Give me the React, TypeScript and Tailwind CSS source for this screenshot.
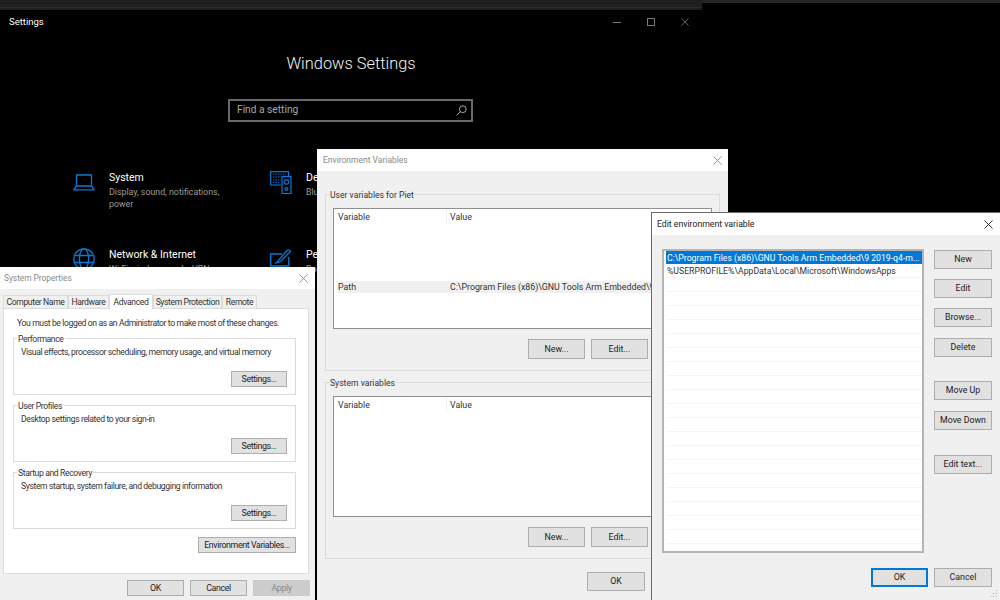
import type { ReactNode } from 'react';

const font = 'font-["Roboto",sans-serif]';
// the System Properties dialog reads tall and tightly set in the screenshot
const tight = 'text-[8.6px] tracking-[-0.38px]';

function Btn({ children, className = '' }: { children: ReactNode; className?: string }) {
  return (
    <div
      className={`flex h-[19px] w-[58px] items-center justify-center whitespace-nowrap border border-[#adadad] bg-[#e1e1e1] text-[8.8px] leading-none text-[#222] ${className}`}
    >
      {children}
    </div>
  );
}

function CloseX({ color = '#8a8a8a', size = 9 }: { color?: string; size?: number }) {
  return (
    <svg width={size} height={size} viewBox="0 0 10 10" fill="none" stroke={color} strokeWidth="1">
      <path d="M0.5 0.5l9 9M9.5 0.5l-9 9" />
    </svg>
  );
}

function Legend({ children, className = '' }: { children: ReactNode; className?: string }) {
  return (
    <span className={`absolute left-[3px] top-[-6px] bg-inherit px-[1px] leading-[13px] text-[#333] ${className}`}>
      {children}
    </span>
  );
}

function SettingsItem({
  icon,
  title,
  desc,
}: {
  icon: ReactNode;
  title: string;
  desc: ReactNode;
}) {
  return (
    <div className="flex h-[77px] gap-[14px]">
      <div className="flex h-[24px] w-[22px] shrink-0 items-center justify-center">{icon}</div>
      <div className="w-[125px]">
        <div className="text-[10.5px] leading-[15px] text-white">{title}</div>
        <div className="mt-[1px] whitespace-nowrap text-[8.8px] leading-[12px] text-[#9b9b9b]">{desc}</div>
      </div>
    </div>
  );
}

const icons = {
  laptop: (
    <svg width="22" height="17" viewBox="0 0 22 17" fill="none" stroke="#0a78d7" strokeWidth="1.3">
      <path d="M3.5 12V1h15v11M0.7 15.8h20.6L18.5 12h-15z" />
    </svg>
  ),
  devices: (
    <svg width="22" height="23" viewBox="0 0 22 23" fill="none" stroke="#0a78d7" strokeWidth="1.2">
      <path d="M11 14H0.7V0.7h17.8V5" />
      <path d="M3 3h13M3 6h8M3 9h8M3 11.5h6" strokeDasharray="1.5 1" />
      <rect x="12" y="5.5" width="9" height="17" />
      <circle cx="16.5" cy="11" r="2.2" />
      <circle cx="16.5" cy="18" r="1.4" />
    </svg>
  ),
  globe: (
    <svg width="22" height="22" viewBox="0 0 22 22" fill="none" stroke="#0a78d7" strokeWidth="1.3">
      <circle cx="11" cy="11" r="10.2" />
      <ellipse cx="11" cy="11" rx="4.6" ry="10.2" />
      <path d="M1 7.5h20M1 14.5h20" />
    </svg>
  ),
  pen: (
    <svg width="22" height="22" viewBox="0 0 22 22" fill="none" stroke="#0a78d7" strokeWidth="1.3">
      <path d="M12 6H0.7v12h18V9M8 21h4" />
      <path d="M5 15c2.5 0 3-1 3.6-2.6L17 2.5c1-1 3-.2 3.4 1L11.5 12.5c-1 1.5-3 2.5-6.5 2.5z" />
    </svg>
  ),
};

function SettingsWindow() {
  return (
    <div className="absolute left-0 top-0 h-[600px] w-[702px] text-white">
      <div className="flex h-[10px] items-start bg-[#1f1f1f]">
        <div className="h-[8px] w-full border-b border-[#2b2b2b]" />
      </div>
      <div className="flex h-[24px] items-center justify-between pl-[9px] pr-[13px]">
        <span className="text-[9.5px] leading-none">Settings</span>
        <div className="flex items-center gap-[26px]">
          <div className="h-px w-[8px] bg-[#7a7a7a]" />
          <div className="h-[8px] w-[8px] border border-[#7a7a7a]" />
          <CloseX color="#7a7a7a" size={8} />
        </div>
      </div>
      <div className="mt-[18px] text-center text-[16.4px] font-light leading-[24px] text-[#f2f2f2]">Windows Settings</div>
      <div className="ml-[228px] mt-[23px] flex h-[23px] w-[245px] items-center justify-between border-2 border-[#6a6a6a] pl-[7px] pr-[4px]">
        <span className="text-[10.2px] leading-none text-[#a8a8a8]">Find a setting</span>
        <svg width="11" height="11" viewBox="0 0 11 11" fill="none" stroke="#a8a8a8" strokeWidth="1">
          <circle cx="6.8" cy="4.2" r="3.4" />
          <path d="M4.4 6.6L0.6 10.4" />
        </svg>
      </div>
      <div className="ml-[73px] mt-[48px] grid w-[400px] grid-cols-[197px_1fr]">
        <SettingsItem
          icon={icons.laptop}
          title="System"
          desc={
            <>
              Display, sound, notifications,
              <br />
              power
            </>
          }
        />
        <SettingsItem icon={icons.devices} title="Devices" desc="Bluetooth, printers, mouse" />
        <SettingsItem icon={icons.globe} title="Network & Internet" desc="Wi-Fi, airplane mode, VPN" />
        <SettingsItem icon={icons.pen} title="Personalization" desc="Background, lock screen" />
      </div>
    </div>
  );
}

function PropGroup({ title, desc }: { title: string; desc: string }) {
  return (
    <div className="relative ml-[9px] h-[57px] w-[283px] border border-[#dcdcdc] bg-white">
      <Legend className={tight}>{title}</Legend>
      <div className={`whitespace-nowrap pl-[7px] pt-[7px] leading-[13px] text-[#333] ${tight}`}>{desc}</div>
      <div className="flex justify-end pr-[8px] pt-[12px]">
        <Btn className={`!h-[16px] !w-[56px] ${tight}`}>Settings...</Btn>
      </div>
    </div>
  );
}

function SystemProperties() {
  const tabs = [
    { label: 'Computer Name', w: 'w-[65px]' },
    { label: 'Hardware', w: 'w-[41px]' },
    { label: 'System Protection', w: 'w-[69px]' },
    { label: 'Remote', w: 'w-[35px]' },
  ];
  const tabClass = `flex h-[13px] items-center justify-center whitespace-nowrap border border-b-0 border-[#dcdcdc] bg-[#f0f0f0] leading-none text-[#333] ${tight}`;
  return (
    <div className="absolute left-0 top-[267px] flex h-[333px] w-[315px] flex-col bg-[#f0f0f0]">
      <div className="flex h-[22px] shrink-0 items-center justify-between bg-white pl-[4px] pr-[7px]">
        <span className="text-[8.3px] leading-none text-[#8a8a8a]">System Properties</span>
        <CloseX />
      </div>
      <div className="px-[3px] pt-[5px]">
        <div className="flex h-[14px] items-end">
          {tabs.slice(0, 2).map((t) => (
            <div key={t.label} className={`${tabClass} ${t.w}`}>
              {t.label}
            </div>
          ))}
          <div className={`relative top-[1px] flex h-[15px] w-[44px] items-center justify-center border border-b-0 border-[#dcdcdc] bg-white leading-none text-[#333] ${tight}`}>
            Advanced
          </div>
          {tabs.slice(2).map((t) => (
            <div key={t.label} className={`${tabClass} ${t.w}`}>
              {t.label}
            </div>
          ))}
        </div>
        <div className="flex h-[266px] w-[306px] flex-col border border-[#dcdcdc] bg-white">
          <div className={`whitespace-nowrap pl-[13px] pt-[8px] leading-[13px] text-[#333] ${tight}`}>
            You must be logged on as an Administrator to make most of these changes.
          </div>
          <div className="mt-[8px] flex flex-col gap-[10px]">
            <PropGroup title="Performance" desc="Visual effects, processor scheduling, memory usage, and virtual memory" />
            <PropGroup title="User Profiles" desc="Desktop settings related to your sign-in" />
            <PropGroup title="Startup and Recovery" desc="System startup, system failure, and debugging information" />
          </div>
          <div className="mt-[8px] flex justify-end pr-[12px]">
            <Btn className={`!h-[16px] !w-[98px] ${tight}`}>Environment Variables...</Btn>
          </div>
        </div>
        <div className="mt-[6px] flex justify-end gap-[6px] pr-[2px]">
          <Btn className={`!h-[16px] !w-[57px] ${tight}`}>OK</Btn>
          <Btn className={`!h-[16px] !w-[57px] ${tight}`}>Cancel</Btn>
          <Btn className={`!h-[16px] !w-[57px] !border-[#cccccc] !bg-[#cccccc] !text-[#8a8a8a] ${tight}`}>Apply</Btn>
        </div>
      </div>
    </div>
  );
}

function VarGroup({ title, path, listH }: { title: string; path?: string; listH: string }) {
  return (
    <div className="relative h-[177px] w-[395px] border border-[#dcdcdc] bg-[#f0f0f0]">
      <Legend className="text-[8.6px]">{title}</Legend>
      <div className={`ml-[7px] mt-[13px] ${listH} w-[379px] border border-[#8f8f8f] bg-white`}>
        <div className="flex h-[15px] text-[8.8px] text-[#333]">
          <div className="w-[113px] border-r border-[#f0f0f0] pl-[4px] leading-[16px]">Variable</div>
          <div className="pl-[3px] leading-[16px]">Value</div>
        </div>
        {path && (
          <div className="ml-[3px] mt-[57px] flex h-[12px] bg-[#f0f0f0] text-[8.8px] leading-[13px] text-[#333]">
            <div className="w-[113px] shrink-0 pl-[1px]">Path</div>
            <div className="whitespace-nowrap">{path}</div>
          </div>
        )}
      </div>
      <div className="mt-[10px] flex gap-[6px] pl-[202px]">
        <Btn className="!h-[20px] !w-[57px]">New...</Btn>
        <Btn className="!h-[20px] !w-[57px]">Edit...</Btn>
      </div>
    </div>
  );
}

function EnvironmentVariables() {
  return (
    <div className="absolute left-[317px] top-[149px] flex h-[451px] w-[411px] flex-col bg-[#f0f0f0]">
      <div className="flex h-[22px] shrink-0 items-center justify-between bg-white pl-[6px] pr-[6px]">
        <span className="text-[8.5px] leading-none text-[#8a8a8a]">Environment Variables</span>
        <CloseX />
      </div>
      <div className="flex flex-col gap-[11px] pl-[8px] pt-[23px]">
        <VarGroup
          title="User variables for Piet"
          path="C:\Program Files (x86)\GNU Tools Arm Embedded\9"
          listH="h-[121px]"
        />
        <VarGroup title="System variables" listH="h-[121px]" />
      </div>
      <div className="mt-[13px] flex pl-[270px]">
        <Btn className="!w-[58px]">OK</Btn>
      </div>
    </div>
  );
}

function EditVariable() {
  const rows = Array.from({ length: 19 });
  const side = [
    { label: 'New', mt: 'mt-0' },
    { label: 'Edit', mt: 'mt-[10px]' },
    { label: 'Browse...', mt: 'mt-[10px]' },
    { label: 'Delete', mt: 'mt-[11px]' },
    { label: 'Move Up', mt: 'mt-[24px]' },
    { label: 'Move Down', mt: 'mt-[11px]' },
    { label: 'Edit text...', mt: 'mt-[25px]' },
  ];
  return (
    <div className="absolute left-[651px] top-[212px] flex h-[388px] w-[349px] flex-col border-l border-t border-[#6a6a6a] bg-[#f0f0f0]">
      <div className="flex h-[22px] shrink-0 items-center justify-between bg-white pl-[5px] pr-[7px]">
        <span className="text-[8.7px] leading-none text-[#222]">Edit environment variable</span>
        <CloseX color="#222" />
      </div>
      <div className="flex pl-[10px] pt-[14px]">
        <div className="h-[304px] w-[262px] overflow-hidden border-2 border-[#b4b4b4] bg-white pl-[2px] text-[8.7px]">
          <div className="h-[13px] whitespace-nowrap bg-[#0078d7] pl-[1px] leading-[14px] text-white">
            C:\Program Files (x86)\GNU Tools Arm Embedded\9 2019-q4-m...
          </div>
          <div className="h-[14px] border-b border-[#f4f4f4] pl-[1px] leading-[15px] text-[#333]">
            %USERPROFILE%\AppData\Local\Microsoft\WindowsApps
          </div>
          {rows.map((_, i) => (
            <div key={i} className="h-[14px] border-b border-[#f4f4f4]" />
          ))}
        </div>
        <div className="ml-[10px] flex flex-col pt-[1px]">
          {side.map((b) => (
            <Btn key={b.label} className={b.mt}>
              {b.label}
            </Btn>
          ))}
        </div>
      </div>
      <div className="mt-[15px] flex justify-end gap-[6px] pr-[8px]">
        <Btn className="!w-[57px] !border-2 !border-[#0078d7]">OK</Btn>
        <Btn>Cancel</Btn>
      </div>
      <svg className="absolute bottom-[2px] right-[2px]" width="8" height="8" viewBox="0 0 8 8" fill="#b0b0b0">
        <rect x="6" y="0" width="1" height="1" />
        <rect x="3" y="3" width="1" height="1" />
        <rect x="6" y="3" width="1" height="1" />
        <rect x="0" y="6" width="1" height="1" />
        <rect x="3" y="6" width="1" height="1" />
        <rect x="6" y="6" width="1" height="1" />
      </svg>
    </div>
  );
}

export default function App() {
  return (
    <div className={`relative h-[600px] w-[1000px] overflow-hidden bg-black ${font}`}>
      <div className="absolute left-0 top-0 h-[3px] w-full bg-[#262626]" />
      <SettingsWindow />
      <SystemProperties />
      <EnvironmentVariables />
      <EditVariable />
    </div>
  );
}
